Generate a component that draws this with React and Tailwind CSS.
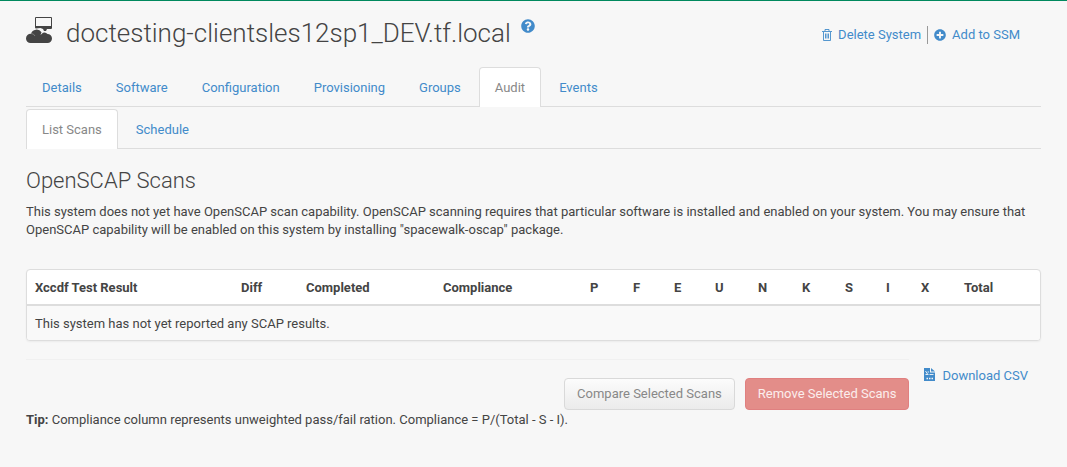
import { FaQuestionCircle, FaPlusCircle } from "react-icons/fa";

const tabs = ["Details", "Software", "Configuration", "Provisioning", "Groups", "Audit", "Events"];
const subTabs = ["List Scans", "Schedule"];

const columns = [
  ["Xccdf Test Result", "w-[206px]"],
  ["Diff", "w-[65px]"],
  ["Completed", "w-[137px]"],
  ["Compliance", "w-[147px]"],
  ["P", "w-[43px]"],
  ["F", "w-[41px]"],
  ["E", "w-[41px]"],
  ["U", "w-[43px]"],
  ["N", "w-[44px]"],
  ["K", "w-[43px]"],
  ["S", "w-[41px]"],
  ["I", "w-[35px]"],
  ["X", "w-[43px]"],
  ["Total", ""],
];

function SystemIcon() {
  return (
    <svg className="h-7 w-7 shrink-0" viewBox="0 0 28 28" fill="#444" aria-hidden="true">
      <path fillRule="evenodd" d="M10 1h15a1 1 0 0 1 1 1v10a1 1 0 0 1-1 1H17L14.500 12L10 12.500a1 1 0 0 1-1-1V2a1 1 0 0 1 1-1zm0 1v8h15V2z" />
      <path d="M17 13h4l-1 2h-2z" />
      <path d="M4.500 27A4.500 4.500 0 0 1 0 22.500A4.700 4.700 0 0 1 5 17.800A5.800 5.800 0 0 1 15.500 16.300L14.500 19L17 16.800A4 4 0 0 1 21.500 18A4.500 4.500 0 0 1 26 22.500A4.500 4.500 0 0 1 21.500 27z" />
      <path d="M5 17.500A4.500 4.500 0 0 1 9 20" fill="none" stroke="#8a8a8a" strokeWidth=".8" />
    </svg>
  );
}

function TrashIcon() {
  return (
    <svg className="h-3 w-[10px]" viewBox="0 0 10 12" fill="none" stroke="currentColor" aria-hidden="true">
      <path d="M0 2.500h10M3 2V.5h4V2M1.500 3v8.500h7V3M3.500 4.500v5M5 4.500v5M6.500 4.500v5" strokeWidth=".9" />
    </svg>
  );
}

function CsvIcon() {
  return (
    <svg className="mb-[3px] h-[13px] w-[11px]" viewBox="0 0 11 13" aria-hidden="true">
      <path d="M0 0h6v4.500h5V13H0z" fill="currentColor" />
      <path d="M7 0l4 3.500H7z" fill="currentColor" />
      <path d="M1.500 3l2 3M1.500 6.500h3M5.500 6.500h4M3.500 4h1.500" stroke="#f7f7f7" strokeWidth=".9" fill="none" />
      <path d="M2.500 10.500h1.500M5 10.500h1.500M7.500 10.500H9" stroke="#f7f7f7" strokeWidth="1.300" fill="none" />
    </svg>
  );
}

function Tabs({ items, active, label }) {
  return (
    <nav aria-label={label} className="flex gap-0.5 border-b border-[#ddd]">
      {items.map((t) => (
        <a
          key={t}
          href="#"
          aria-current={t === active ? "page" : undefined}
          className={
            t === active
              ? "-mb-px rounded-t border border-b-0 border-[#ddd] bg-white px-[15px] pt-[11px] pb-[10px] text-[#888]"
              : "-mb-px border border-b-0 border-transparent px-[15px] pt-[11px] pb-[10px] text-[#428bca]"
          }
        >
          {t}
        </a>
      ))}
    </nav>
  );
}

export default function App() {
  return (
    <div className="min-h-screen border-t border-[#00895e] bg-[#f7f7f7] px-[26px] font-['Roboto',sans-serif] text-[13px] leading-[18px] text-[#444]">
      <header className="flex h-[66px] justify-between">
        <h1 className="flex items-start pt-[15px] text-[26px] leading-[34px] font-light">
          <SystemIcon />
          <span className="ml-3">doctesting-clientsles12sp1_DEV.tf.local</span>
          <a href="#" aria-label="Help" className="ml-[10px] pt-[3px] text-[#428bca]">
            <FaQuestionCircle size={14} />
          </a>
        </h1>
        <div className="mt-[25px] mr-[21px] flex h-[18px] items-center text-[#428bca]">
          <a href="#" className="flex items-center gap-1.5"><TrashIcon />Delete System</a>
          <span className="mx-[6px] h-[18px] w-px bg-[#999]" />
          <a href="#" className="flex items-center gap-[6px]"><FaPlusCircle size={12} />Add to SSM</a>
        </div>
      </header>

      <Tabs items={tabs} active="Audit" label="System" />
      <div className="mt-0.5">
        <Tabs items={subTabs} active="List Scans" label="Audit" />
      </div>

      <h2 className="mt-[18px] text-[22px] leading-7 font-light">OpenSCAP Scans</h2>
      <p className="mt-2">
        This system does not yet have OpenSCAP scan capability. OpenSCAP scanning requires that particular software is
        installed and enabled on your system. You may ensure that OpenSCAP capability will be enabled on this system by
        installing "spacewalk-oscap" package.
      </p>

      <div className="mt-[30px] overflow-hidden rounded border border-[#ddd] bg-white shadow-xs">
        <table className="w-full table-fixed border-collapse text-left">
          <thead>
            <tr className="border-b-2 border-[#ddd]">
              {columns.map(([name, width]) => (
                <th key={name} scope="col" className={`${width} pt-[9px] pb-[7px] pl-2 font-bold`}>{name}</th>
              ))}
            </tr>
          </thead>
          <tbody>
            <tr className="bg-[#f9f9f9]">
              <td colSpan={14} className="px-2 pt-[9px] pb-[7px]">This system has not yet reported any SCAP results.</td>
            </tr>
          </tbody>
        </table>
      </div>

      <div className="mt-[18px] flex items-start gap-[15px]">
        <div className="flex grow justify-end gap-[10px] border-t border-[#f0f0f0] pt-[18px]">
          <button type="button" disabled className="h-8 rounded border border-[#d9d9d9] bg-linear-to-b from-[#fcfcfc] to-[#ebebeb] px-3 text-[#888]">
            Compare Selected Scans
          </button>
          <button type="button" disabled className="h-8 rounded border border-[#e08080] bg-[#e38d89] px-3 text-[#fbeeed]">
            Remove Selected Scans
          </button>
        </div>
        <a href="#" className="mt-2 mr-[13px] flex items-center gap-[7px] text-[#428bca]"><CsvIcon />Download CSV</a>
      </div>
      <p className="mt-px"><strong className="font-bold">Tip:</strong> Compliance column represents unweighted pass/fail ration. Compliance = P/(Total - S - I).</p>
    </div>
  );
}
